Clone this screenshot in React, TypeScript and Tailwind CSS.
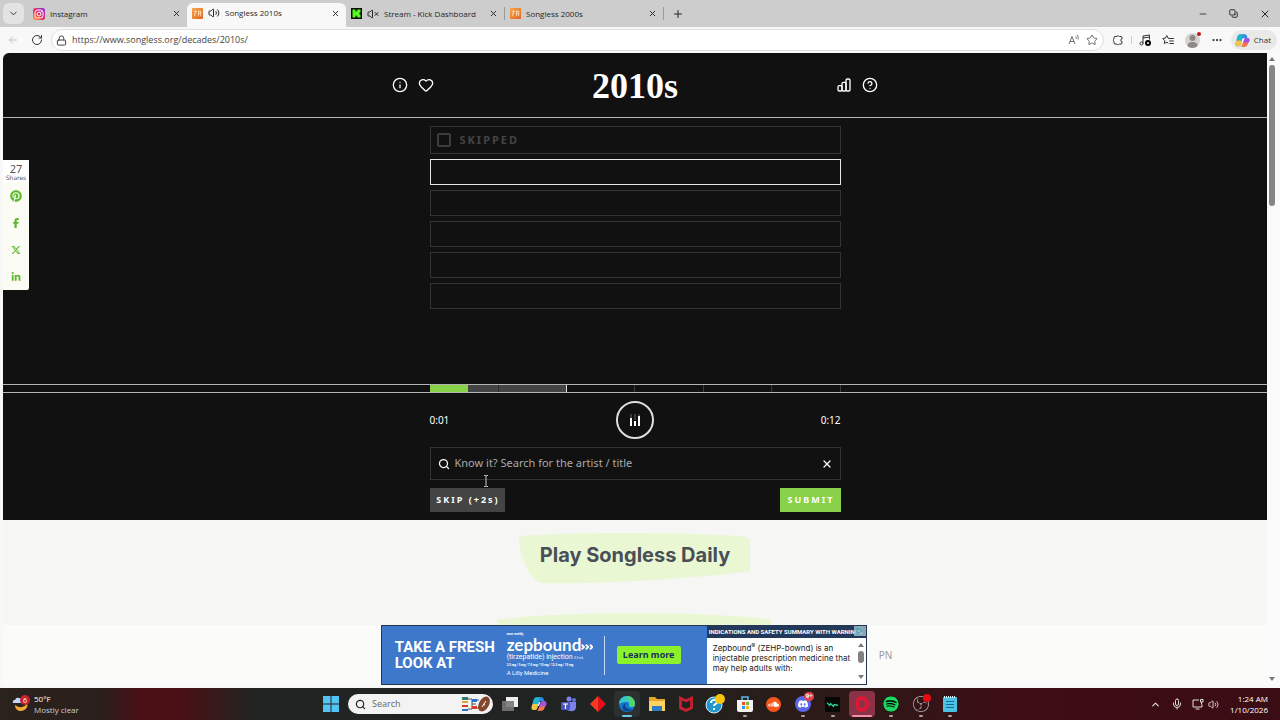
import { useState } from 'react';
import type { ReactNode } from 'react';
import clsx from 'clsx';
import {
  ArrowLeft,
  ChevronDown,
  ChevronUp,
  CircleHelp,
  Copy,
  Ellipsis,
  Heart,
  Info,
  Lock,
  Mic,
  Minus,
  Plus,
  RotateCw,
  Search,
  Star,
  Volume2,
  VolumeX,
  X,
} from 'lucide-react';
import { FaFacebookF, FaLinkedinIn, FaPinterest, FaSoundcloud, FaSpotify, FaXTwitter } from 'react-icons/fa6';
import { SiDiscord, SiMcafee, SiObsstudio } from 'react-icons/si';

function InstagramIcon() {
  return (
    <svg viewBox="0 0 24 24" className="size-3 shrink-0">
      <defs>
        <linearGradient id="ig" x1="0" y1="1" x2="1" y2="0">
          <stop offset="0" stopColor="#fdbb3b" />
          <stop offset="0.4" stopColor="#f0334f" />
          <stop offset="1" stopColor="#8a2be8" />
        </linearGradient>
      </defs>
      <rect width="24" height="24" rx="5" fill="url(#ig)" />
      <rect x="4" y="4" width="16" height="16" rx="5" fill="none" stroke="#fff" strokeWidth="2" />
      <circle cx="12" cy="12" r="4" fill="none" stroke="#fff" strokeWidth="2" />
      <circle cx="17" cy="7" r="1" fill="#fff" />
    </svg>
  );
}

function SonglessIcon() {
  return (
    <svg viewBox="0 0 24 24" className="size-[11px] shrink-0">
      <defs>
        <linearGradient id="sl" x1="0" y1="0" x2="1" y2="1">
          <stop offset="0" stopColor="#f7a34b" />
          <stop offset="1" stopColor="#e2661c" />
        </linearGradient>
      </defs>
      <rect width="24" height="24" rx="2" fill="url(#sl)" />
      <path d="M4 7h7M8 7v5H6v6M13 7h7M14 12h5M14 7v11M19 7v11" stroke="#ffe3bd" strokeWidth="2" fill="none" />
    </svg>
  );
}

function KickIcon() {
  return (
    <svg viewBox="0 0 22 22" className="size-[11px] shrink-0">
      <rect width="22" height="22" fill="#0b0f0a" />
      <path d="M3 3h6v4h2V5h2V3h6v6h-2v4h2v6h-6v-2h-2v-2H9v4H3z" fill="#53fc18" />
    </svg>
  );
}

function CopilotIcon({ className }: { className: string }) {
  return (
    <svg viewBox="0 0 24 24" className={className}>
      <path d="M9 2h7c2 0 2.500 1.500 3 3l1 3h-5c-2 0-3 1-3.500 3L9.500 18c-.5 2-1.500 3-3.500 3H4c-3 0-3.500-3-3-5L4 6c.7-2.500 2-4 5-4z" fill="#2b8be6" />
      <path d="M4 6c.7-2.500 2-4 5-4h7c-2 0-3 1-3.500 3l-2 7H2.200z" fill="#21b5c9" />
      <path d="M1 16l1.200-4h8.300l-1 6c-.5 2-1.500 3-3.500 3H4c-3 0-3.500-3-3-5z" fill="#f2c443" />
      <path d="M15 22H8c2 0 3-1 3.500-3l3-8c.5-2 1.500-3 3.500-3h2c3 0 3.500 3 3 5l-3 5c-.7 2.500-2 4-5 4z" fill="#e8559b" />
      <path d="M14.500 11c.5-2 1.500-3 3.500-3h2c3 0 3.500 3 3 5l-.8 1.500H13.200z" fill="#9a55e3" />
      <path d="M8 22c2 0 3-1 3.500-3l1-2.500h8.500L20 18c-.7 2.500-2 4-5 4z" fill="#f5793f" />
      <path d="M10 15l2-6h2l-2 6z" fill="#fff" />
    </svg>
  );
}

function ExtensionsIcon() {
  return (
    <svg viewBox="0 0 24 24" className="size-3" fill="none" stroke="currentColor" strokeWidth="2" strokeLinejoin="round">
      <path d="M6 5h4a3 3 0 015 0h3q2 0 2 2v3a2 2 0 000 5v3q0 2-2 2h-3a3 3 0 01-5 0H6q-2 0-2-2v-3a3 3 0 010-5V7q0-2 2-2z" />
    </svg>
  );
}

function MusicIcon() {
  return (
    <svg viewBox="0 0 24 24" className="size-3" fill="none" stroke="currentColor" strokeWidth="2" strokeLinejoin="round">
      <path d="M8 19V4l13-2v9M8 8l13-2" />
      <circle cx="5" cy="19" r="3" />
    </svg>
  );
}

function FavoritesIcon() {
  return (
    <svg viewBox="0 0 24 24" className="size-3" fill="none" stroke="currentColor" strokeWidth="2" strokeLinejoin="round" strokeLinecap="round">
      <path d="M14 9l-2-1-2.500-5L7 8l-5.500 1 4 4.200L4.700 19l5-2.500L12 18M15 9h8M15 14h8M16 19h7" />
    </svg>
  );
}

function StatsIcon() {
  return (
    <svg viewBox="0 0 24 24" className="size-4" fill="none" stroke="currentColor" strokeWidth="2" strokeLinejoin="round">
      <rect x="3" y="13" width="6" height="8" rx="2" />
      <rect x="9" y="8" width="6" height="13" rx="2" />
      <rect x="15" y="3" width="6" height="18" rx="2" />
    </svg>
  );
}

function NetworkIcon() {
  return (
    <svg viewBox="0 0 24 24" className="mr-1 size-3" fill="none" stroke="currentColor" strokeWidth="2" strokeLinejoin="round">
      <path d="M14 4H2v14h18v-5M7 22h8M17 3h5v5h-5zM19 8v5" />
    </svg>
  );
}

const tabs = [
  { title: 'Instagram', icon: <InstagramIcon />, sound: null, active: false, divider: false },
  { title: 'Songless 2010s', icon: <SonglessIcon />, sound: 'on', active: true, divider: false },
  { title: 'Stream - Kick Dashboard', icon: <KickIcon />, sound: 'off', active: false, divider: true },
  { title: 'Songless 2000s', icon: <SonglessIcon />, sound: null, active: false, divider: true },
];

function TabStrip() {
  return (
    <div className="flex h-[27px] shrink-0 items-center bg-[#cdcdcd] pl-[3px] font-['Open_Sans',sans-serif] text-[#262626]">
      <button aria-label="Tab actions" className="mr-1 flex size-[21px] items-center justify-center rounded-md bg-[#e3e3e3]">
        <ChevronDown className="size-[11px]" />
      </button>
      {tabs.map((tab) => (
        <div
          key={tab.title}
          className={clsx(
            'flex w-[159px] items-center gap-[5px] pr-[6px] pl-[5px]',
            tab.active ? 'h-6 self-end rounded-t-md bg-[#f8f8f8] pb-[4px]' : 'h-[13px]',
            tab.divider && 'border-r border-[#9b9b9b]',
          )}
        >
          {tab.icon}
          {tab.sound === 'on' && <Volume2 className="size-3 shrink-0" strokeWidth={2} />}
          {tab.sound === 'off' && <VolumeX className="size-3 shrink-0" strokeWidth={2} />}
          <span className="flex-1 text-[8px] leading-[12px] whitespace-nowrap">{tab.title}</span>
          <button aria-label={`Close ${tab.title}`}>
            <X className="size-[9px]" strokeWidth={2.5} />
          </button>
        </div>
      ))}
      <button aria-label="New tab" className="ml-2">
        <Plus className="size-3" strokeWidth={2} />
      </button>
      <div className="ml-auto flex items-center gap-[21px] pr-[9px]">
        <button aria-label="Minimize"><Minus className="size-[10px]" strokeWidth={2} /></button>
        <button aria-label="Restore"><Copy className="size-[9px] -scale-x-100 rotate-90" strokeWidth={2.5} /></button>
        <button aria-label="Close window"><X className="size-3" strokeWidth={2} /></button>
      </div>
    </div>
  );
}

function Toolbar() {
  return (
    <div className="flex h-[26px] shrink-0 items-center bg-[#f8f8f8] pr-[3px] pl-[7px] font-['Open_Sans',sans-serif] text-[#333]">
      <button aria-label="Back" className="mr-3 text-[#c4c4c4]"><ArrowLeft className="size-3" strokeWidth={2} /></button>
      <button aria-label="Reload"><RotateCw className="size-3" strokeWidth={2} /></button>
      <div className="ml-2 flex h-[22px] flex-1 items-center rounded-full border border-[#dedede] bg-white pr-[5px] pl-1">
        <Lock className="size-[11px]" strokeWidth={2} />
        <input
          aria-label="Address"
          defaultValue="https://www.songless.org/decades/2010s/"
          className="ml-[5px] min-w-0 flex-1 text-[9px] text-[#444] outline-none"
        />
        <button aria-label="Read aloud" className="mr-[6px] text-[#6b6b6b]">
          <svg viewBox="0 0 24 24" className="size-3" fill="none" stroke="currentColor" strokeWidth="2">
            <path d="M2 20L8 5l6 15M4 15h8M15 5c2 2 2 3 1 5M18 2c3 3 3 6 2 9" />
          </svg>
        </button>
        <button aria-label="Add to favorites" className="text-[#6b6b6b]"><Star className="size-3" strokeWidth={2} /></button>
      </div>
      <button aria-label="Extensions" className="ml-2"><ExtensionsIcon /></button>
      <div className="mx-[7px] h-2 w-px bg-[#d0d0d0]" />
      <button aria-label="Music extension" className="relative">
        <MusicIcon />
        <span className="absolute right-0 bottom-0 size-[6px] rounded-full border-2 border-black bg-white" />
      </button>
      <button aria-label="Favorites" className="ml-[11px]"><FavoritesIcon /></button>
      <button aria-label="Profile" className="relative ml-[11px]">
        <svg viewBox="0 0 30 30" className="size-[15px]">
          <circle cx="15" cy="15" r="15" fill="#d5d2cf" />
          <circle cx="15" cy="10" r="6" fill="#8c8986" />
          <path d="M5 26c0-6 4-8 10-8s10 2 10 8c-5 5-15 5-20 0z" fill="#8c8986" />
        </svg>
        <span className="absolute -top-px -right-px size-1 rounded-full bg-[#c3131c]" />
      </button>
      <button aria-label="Settings" className="ml-[11px]"><Ellipsis className="size-3" strokeWidth={2.5} /></button>
      <button className="ml-2 flex h-5 items-center gap-1 rounded-full bg-[#e9e9e9] pr-[6px] pl-1 text-[8px]">
        <CopilotIcon className="size-[15px]" />
        Chat
      </button>
    </div>
  );
}

function GameHeader() {
  return (
    <header className="border-b border-[#b5b5b5]">
      <div className="mx-auto flex h-16 w-[486px] items-center justify-between">
        <div className="flex flex-1 gap-[10px]">
          <button aria-label="About"><Info className="size-4" strokeWidth={2} /></button>
          <button aria-label="Support"><Heart className="size-4" strokeWidth={2} /></button>
        </div>
        <h1 className="pt-[2px] font-['Liberation_Serif',serif] text-[36px] leading-[40px] font-bold">2010s</h1>
        <div className="flex flex-1 justify-end gap-[10px]">
          <button aria-label="Stats"><StatsIcon /></button>
          <button aria-label="How to play"><CircleHelp className="size-4" strokeWidth={2} /></button>
        </div>
      </div>
    </header>
  );
}

function Guesses() {
  return (
    <ol className="mx-auto flex h-[266px] w-[411px] flex-col gap-[5px] pt-2">
      <li className="flex h-7 items-center gap-[9px] border border-[#333] pl-[6px] text-[11px] font-bold tracking-[2px] text-[#444]">
        <span className="size-[14px] rounded-xs border-2 border-[#3d3d3d]" />
        SKIPPED
      </li>
      <li className="h-[26px] border border-[#e5e5e5]" />
      {[3, 4, 5, 6].map((n) => (
        <li key={n} className="h-[26px] border border-[#333]" />
      ))}
    </ol>
  );
}

function Player() {
  const [guess, setGuess] = useState('');

  return (
    <>
      <div className="border-y border-[#b5b5b5]">
        <div className="mx-auto flex h-[7px] w-[411px]">
          <div className="w-[38px] bg-[#88d148]" />
          <div className="w-[31px] border-r border-[#2a2a2a] bg-[#444]" />
          <div className="w-[68px] border-r border-[#ddd] bg-[#444]" />
          {[3, 4, 5, 6].map((n) => (
            <div key={n} className="flex-1 border-r border-[#3a3a3a]" />
          ))}
        </div>
      </div>
      <div className="mx-auto w-[411px] pb-2">
        <div className="flex h-[54px] items-center justify-between text-[10px]">
          <span className="flex-1">0:01</span>
          <button aria-label="Pause" className="flex size-[38px] items-center justify-center rounded-full border-2 border-[#ddd]">
            <svg viewBox="0 0 12 14" className="h-[14px] w-3">
              <path d="M1 1h2v4H1zM5 1h2v6H5zM9 1h2v2H9z" fill="#3a3a3a" />
              <path d="M1 5h2v8H1zM5 8h2v5H5zM9 3h2v10H9z" fill="#fff" />
            </svg>
          </button>
          <span className="flex-1 text-right">0:12</span>
        </div>
        <form onSubmit={(e) => e.preventDefault()}>
          <div className="relative flex h-[33px] items-center border border-[#333] px-[7px]">
            <Search className="size-3" strokeWidth={2.5} />
            <input
              aria-label="Search for the artist or title"
              value={guess}
              onChange={(e) => setGuess(e.target.value)}
              placeholder="Know it? Search for the artist / title"
              className="ml-[5px] min-w-0 flex-1 text-[11px] outline-none placeholder:text-[#aaa]"
            />
            <button type="button" aria-label="Clear" onClick={() => setGuess('')}>
              <X className="size-3" strokeWidth={2.5} />
            </button>
            {/* text cursor */}
            <svg viewBox="0 0 6 12" className="absolute top-[27px] left-[52px] h-3 w-[6px]" fill="none" stroke="#ccc">
              <path d="M1 .5h1.500L3 1l.5-.5H5M3 1v10M1 11.500h1.500L3 11l.5.500H5" />
            </svg>
          </div>
          <div className="mt-2 flex h-6 justify-between text-[9px] font-bold">
            <button type="button" className="w-[75px] bg-[#444] pl-[2px] tracking-[2px]">SKIP (+2s)</button>
            <button type="submit" className="w-[61px] bg-[#88d148] pl-[2px] tracking-[2px]">SUBMIT</button>
          </div>
        </form>
      </div>
    </>
  );
}

function ShareBar() {
  const links = [
    { label: 'Pinterest', icon: <FaPinterest className="size-3" /> },
    { label: 'Facebook', icon: <FaFacebookF className="size-[10px]" /> },
    { label: 'X', icon: <FaXTwitter className="size-[10px]" /> },
    { label: 'LinkedIn', icon: <FaLinkedinIn className="size-[10px]" /> },
  ];

  return (
    <aside className="absolute top-[107px] left-0 w-[26px] rounded-r-xs bg-[#fbfdf5]">
      <div className="h-[22px] bg-white pt-[3px] text-center text-[#555]">
        <p className="text-[11px] leading-[12px]">27</p>
        <p className="font-['DejaVu_Sans',sans-serif] text-[6px] leading-[6px]">Shares</p>
      </div>
      {links.map((link) => (
        <a key={link.label} href="#" aria-label={link.label} className="flex h-[27px] items-center justify-center text-[#5cb82c]">
          {link.icon}
        </a>
      ))}
    </aside>
  );
}

function Intro() {
  return (
    <section className="flex flex-col items-center bg-[#f6f6f5] pt-3">
      <div className="relative flex h-[53px] w-[234px] justify-center">
        <svg viewBox="0 0 234 53" className="absolute inset-0 size-full">
          <path d="M5 4C50 0 180 0 228 5q4 1 4 8v26C190 46 70 53 24 51 12 50 4 26 1 10q-1-5 4-6z" fill="#e9f7d2" />
        </svg>
        <h2 className="relative pt-[11px] font-[Inter,sans-serif] text-[20px] leading-[24px] font-bold text-[#484f59]">
          Play Songless Daily
        </h2>
      </div>
      <svg viewBox="0 0 280 90" className="mt-[27px] h-[90px] w-[280px]">
        <path d="M2 8C60 -1 220 -1 276 8l3 60H10z" fill="#e9f7d2" />
      </svg>
    </section>
  );
}

function Arrow({ up }: { up?: boolean }) {
  return (
    <svg viewBox="0 0 6 4" className={clsx('h-1 w-[6px] shrink-0', up && 'rotate-180')}>
      <path d="M0 0h6L3 4z" fill="#777" />
    </svg>
  );
}

function AdBar() {
  return (
    <div className="absolute inset-x-0 bottom-0 flex h-[60px] items-center justify-center gap-3 bg-[#fbfbfa] pl-[3px]">
      <div className="flex h-[60px] w-[486px] border border-[#27364f] bg-[#3d78cb] text-white">
        <p className="w-[125px] self-center pl-[13px] font-[Roboto,sans-serif] text-[15px] leading-[16px] font-bold whitespace-nowrap">
          TAKE A FRESH<br />LOOK AT
        </p>
        <div className="w-[97px] pt-[7px] font-[Roboto,sans-serif] whitespace-nowrap">
          <p className="text-[3px] leading-[3px] font-bold">once weekly</p>
          <p className="flex items-center font-[Lato,sans-serif] text-[17px] leading-[17px] font-bold">
            zepbound
            <svg viewBox="0 0 20 10" className="mt-1 h-[6px] w-3" fill="none" stroke="#fff" strokeWidth="3">
              <path d="M1 1l4 4-4 4M8 1l4 4-4 4M15 1l4 4-4 4" />
            </svg>
          </p>
          <p className="text-[7px] leading-[8px]">(tirzepatide) injection <small className="text-[3px]">0.5 mL</small></p>
          <p className="text-[3px] leading-[6px] font-bold">2.5 mg / 5 mg / 7.5 mg / 10 mg / 12.5 mg / 15 mg</p>
          <p className="pt-[1px] text-[6px] leading-[8px]">A Lilly Medicine</p>
        </div>
        <div className="h-[39px] w-px self-center bg-[#c7dbf5]" />
        <div className="flex flex-1 items-center pl-3">
          <button className="h-[18px] w-16 rounded-xs bg-[#8cf22b] text-[9px] font-bold text-[#15315c]">Learn more</button>
        </div>
        <div className="flex w-[159px] flex-col bg-white text-[#222]">
          <div className="relative h-3 bg-[#22395b] pl-[2px] font-[Roboto,sans-serif] text-[6px] leading-[12px] font-bold whitespace-nowrap text-white">
            INDICATIONS AND SAFETY SUMMARY WITH WARNINGS
            <svg viewBox="0 0 12 10" className="absolute top-0 right-0 h-[10px] w-3">
              <rect width="12" height="10" fill="#9fc4d0" opacity=".8" />
              <path d="M3 2l5 3-5 3z" fill="none" stroke="#2aa3b8" />
            </svg>
          </div>
          <div className="flex h-[46px] justify-between overflow-hidden pt-[5px] pr-px pl-[6px]">
            <p className="w-[140px] font-[Inter,sans-serif] text-[8px] leading-[10px] whitespace-nowrap">
              Zepbound<sup className="text-[6px]">®</sup> (ZEHP-bownd) is an<br />
              injectable prescription medicine that<br />
              may help adults with:
            </p>
            <div className="flex h-9 w-2 flex-col items-center justify-between text-[#777]">
              <Arrow up />
              <span className="mb-2 h-3 w-[6px] rounded-full bg-[#808080]" />
              <Arrow />
            </div>
          </div>
        </div>
      </div>
      <span className="text-[10px] text-[#9a9a9a]">PN</span>
    </div>
  );
}

const apps: { name: string; icon: ReactNode; running?: boolean; active?: boolean }[] = [
  {
    name: 'Task View',
    icon: (
      <svg viewBox="0 0 16 16" className="size-4">
        <rect x="4" y="1" width="12" height="10" fill="#eee" />
        <rect x="0" y="5" width="12" height="10" fill="#777" opacity=".9" />
      </svg>
    ),
  },
  { name: 'Copilot', icon: <CopilotIcon className="size-4" /> },
  {
    name: 'Teams',
    icon: (
      <svg viewBox="0 0 16 16" className="size-4">
        <circle cx="8" cy="3" r="2.500" fill="#7f87ee" />
        <circle cx="13" cy="4" r="2" fill="#6a72d8" />
        <path d="M4 6h11v5a4 4 0 01-5 4c-4 0-6-2-6-5z" fill="#7c82ea" />
        <rect x="0" y="6" width="9" height="8" rx="1" fill="#4b53bc" />
        <path d="M2 8h5M4.500 8v5" stroke="#fff" strokeWidth="1.200" />
      </svg>
    ),
  },
  {
    name: 'Diamond',
    icon: (
      <svg viewBox="0 0 16 16" className="size-4">
        <path d="M8 0l8 8-8 8z" fill="#e3101b" />
        <path d="M8 0v16L0 8z" fill="#f33a20" />
      </svg>
    ),
  },
  {
    name: 'Edge',
    running: true,
    active: true,
    icon: (
      <svg viewBox="0 0 16 16" className="size-4">
        <circle cx="8" cy="8" r="8" fill="#1478cf" />
        <path d="M0 8a8 8 0 0116 0c0 3-4 4-6 2 1-2 0-4-3-4-3 0-6 1-7 2z" fill="#38c6c6" />
        <path d="M8 0a8 8 0 018 8c0 3-4 4-6 2 1-3 0-6-2-10z" fill="#54d76c" />
        <path d="M6 9c0 3 3 5 7 4-2 3-7 3-9 0-1-3 1-6 4-6-1 0-2 1-2 2z" fill="#0c438f" />
      </svg>
    ),
  },
  {
    name: 'File Explorer',
    icon: (
      <svg viewBox="0 0 16 16" className="size-4">
        <path d="M0 1h6l2 2h8v12H0z" fill="#e5a62c" />
        <path d="M0 5h16v10H0z" fill="#fbd45f" />
        <path d="M3 10h10v5H3z" fill="#2b7cc8" />
      </svg>
    ),
  },
  { name: 'McAfee', icon: <SiMcafee className="size-4 text-[#c8202f]" /> },
  {
    name: 'Get Help',
    icon: (
      <svg viewBox="0 0 20 20" className="size-5">
        <circle cx="9" cy="11" r="8" fill="#2197cf" stroke="#d5eef8" />
        <path d="M6 9c0-4 6-4 6-1 0 2-3 2-3 4M9 14v2" stroke="#fff" strokeWidth="2" fill="none" />
        <circle cx="15" cy="5" r="5" fill="#f8c40d" />
      </svg>
    ),
  },
  {
    name: 'Microsoft Store',
    running: true,
    icon: (
      <svg viewBox="0 0 16 16" className="size-4">
        <path d="M5 4V1h6v3" stroke="#54b8ec" strokeWidth="1.500" fill="none" />
        <path d="M0 4h16v10q0 2-2 2H2q-2 0-2-2z" fill="#f3f3f3" />
        <path d="M5 6h3v3H5z" fill="#e8512c" />
        <path d="M9 6h3v3H9z" fill="#7fb62b" />
        <path d="M5 10h3v3H5z" fill="#2f9be0" />
        <path d="M9 10h3v3H9z" fill="#f6b71c" />
      </svg>
    ),
  },
  {
    name: 'SoundCloud',
    icon: (
      <span className="flex size-[15px] items-center justify-center rounded-full bg-[#f4581c]">
        <FaSoundcloud className="size-[11px] text-white" />
      </span>
    ),
  },
  {
    name: 'Discord',
    running: true,
    icon: (
      <span className="relative flex size-4 items-center justify-center rounded-full bg-[#5a65ea]">
        <SiDiscord className="size-[10px] text-white" />
        <span className="absolute -top-1 -right-[3px] flex h-[9px] w-[10px] items-center justify-center rounded-full bg-[#e04550] text-[6px] font-bold text-white">
          9+
        </span>
      </span>
    ),
  },
  {
    name: 'Voice app',
    running: true,
    icon: (
      <svg viewBox="0 0 16 16" className="size-[15px]">
        <rect width="16" height="16" fill="#050807" />
        <path d="M2 6l3 3 1-2 3 3 1-2 4 1" stroke="#35d992" strokeWidth="1.400" fill="none" />
      </svg>
    ),
  },
  {
    name: 'Opera',
    running: true,
    active: true,
    icon: (
      <svg viewBox="0 0 16 16" className="size-4">
        <ellipse cx="8" cy="8" rx="5" ry="6" fill="none" stroke="#dc1734" strokeWidth="4" />
      </svg>
    ),
  },
  { name: 'Spotify', running: true, icon: <FaSpotify className="size-4 rounded-full bg-black text-[#1ed760]" /> },
  {
    name: 'OBS Studio',
    running: true,
    icon: (
      <span className="relative">
        <SiObsstudio className="size-4 text-[#b9b5b5]" />
        <span className="absolute -top-[2px] -right-[2px] size-2 rounded-full bg-[#e50b14]" />
      </span>
    ),
  },
  {
    name: 'Notepad',
    running: true,
    icon: (
      <svg viewBox="0 0 14 16" className="h-4 w-[14px]">
        <rect y="1" width="14" height="15" rx="1" fill="#4cc1e4" />
        <path d="M1 1h12" stroke="#d9f3fb" strokeWidth="2" strokeDasharray="1 1" />
        <path d="M3 5.500h8M3 8.500h8M3 11.500h8" stroke="#136b93" />
      </svg>
    ),
  },
];

function Taskbar() {
  return (
    <footer className="flex h-8 shrink-0 items-center bg-linear-[90deg,#2a221c_0%,#2b1f1c_8%,#491015_11%,#491015_14%,#222423_20%,#1f2322_50%,#2b1c18_62%,#331417_72%,#3f0d14_80%,#3a0c13_100%] font-['Open_Sans',sans-serif] text-white">
      <div className="flex flex-1 items-center gap-1 pr-[6px] pl-3 text-[8px] leading-[11px]">
        <span className="relative size-[18px]">
          <svg viewBox="0 0 18 18" className="size-[18px]">
            <path d="M3 10a7 6 0 0012-2c2 5-3 8-6 8-3 0-6-2-6-6z" fill="#f4a636" />
            <path d="M1 8q-1-3 2-3 1-3 4-2 3 0 3 5z" fill="#c4d5fb" />
          </svg>
          <span className="absolute top-0 right-0 flex size-[10px] items-center justify-center rounded-full bg-[#c8202c] text-[7px]">6</span>
        </span>
        <p>
          50°F<br />
          <span className="text-[#cfcfcf]">Mostly clear</span>
        </p>
      </div>
      <div className="flex items-center">
        <button aria-label="Start" className="mr-[9px]">
          <svg viewBox="0 0 16 16" className="size-4">
            <path d="M0 0h7.500v7.500H0zM8.500 0H16v7.500H8.500zM0 8.500h7.500V16H0zM8.500 8.500H16V16H8.500z" fill="#52c5f3" />
          </svg>
        </button>
        <div className="mr-1 flex h-5 w-[145px] items-center rounded-full bg-[#f3f3f3] pr-[3px] pl-[7px]">
          <Search className="size-[11px] text-[#222]" strokeWidth={2.5} />
          <input
            aria-label="Search Windows"
            placeholder="Search"
            className="ml-[6px] min-w-0 flex-1 text-[9px] text-black outline-none placeholder:text-[#666]"
          />
          <svg viewBox="0 0 28 16" className="h-4 w-7">
            <path d="M6 3h4v5h4M6 13h4V8M14 4h3M14 12h3" stroke="#555" fill="none" />
            <path d="M0 1h6v3H0z" fill="#2c7d6f" />
            <path d="M0 5h6v2H0z" fill="#e0a92f" />
            <path d="M0 9h6v2H0z" fill="#d63d2e" />
            <path d="M0 13h6v2H0z" fill="#2a72c9" />
            <path d="M10 3h5v3h-5z" fill="#2a72c9" />
            <path d="M10 10h5v3h-5z" fill="#d63d2e" />
            <ellipse cx="22" cy="8" rx="5" ry="8" transform="rotate(30 22 8)" fill="#83452b" />
            <path d="M20 11l4-6M21 8l2 1" stroke="#fff" />
          </svg>
        </div>
        <div className="flex w-[466px] justify-between">
          {apps.map((app) => (
            <button
              key={app.name}
              aria-label={app.name}
              className={clsx(
                'relative flex h-[26px] w-[26px] items-center justify-center rounded-sm',
                app.name === 'Opera' && 'bg-[#8a3348]',
                app.name === 'Edge' && 'bg-[#2c302f]',
              )}
            >
              {app.icon}
              {app.running && (
                <span
                  className={clsx(
                    'absolute bottom-0 h-[2px] rounded-full',
                    app.name === 'Opera' && 'w-5 bg-[#f58fa5]',
                    app.name === 'Edge' && 'w-[10px] bg-[#6cc9ee]',
                    !app.active && 'w-1 bg-[#a8a3a3]',
                  )}
                />
              )}
            </button>
          ))}
        </div>
      </div>
      <div className="flex flex-1 items-center justify-end pr-3 text-[#ddd]">
        <ChevronUp className="mr-[10px] size-[11px]" strokeWidth={2.5} />
        <Mic className="mr-[9px] size-3" strokeWidth={2} />
        <NetworkIcon />
        <Volume2 className="mr-[11px] size-[11px]" strokeWidth={2} />
        <p className="text-right text-[8px] leading-[11px] text-white">1:24 AM<br />1/10/2026</p>
      </div>
    </footer>
  );
}

export default function App() {
  return (
    <div className="flex h-screen flex-col overflow-hidden bg-[#f8f8f8] font-['Noto_Sans',sans-serif]">
      <TabStrip />
      <Toolbar />
      <div className="mb-[3px] flex min-h-0 flex-1 pl-[3px]">
        <main className="relative min-w-0 flex-1 overflow-hidden rounded-tl-md bg-[#f6f6f5]">
          <div className="bg-[#111] text-white">
            <GameHeader />
            <Guesses />
            <Player />
          </div>
          <Intro />
          <ShareBar />
          <AdBar />
        </main>
        <div className="flex w-[13px] flex-col items-center bg-[#fbfbfb] py-1 pr-[3px]">
          <Arrow up />
          <div className="mt-1 mb-auto h-[141px] w-[6px] rounded-full bg-[#858585]" />
          <Arrow />
        </div>
      </div>
      <Taskbar />
    </div>
  );
}
